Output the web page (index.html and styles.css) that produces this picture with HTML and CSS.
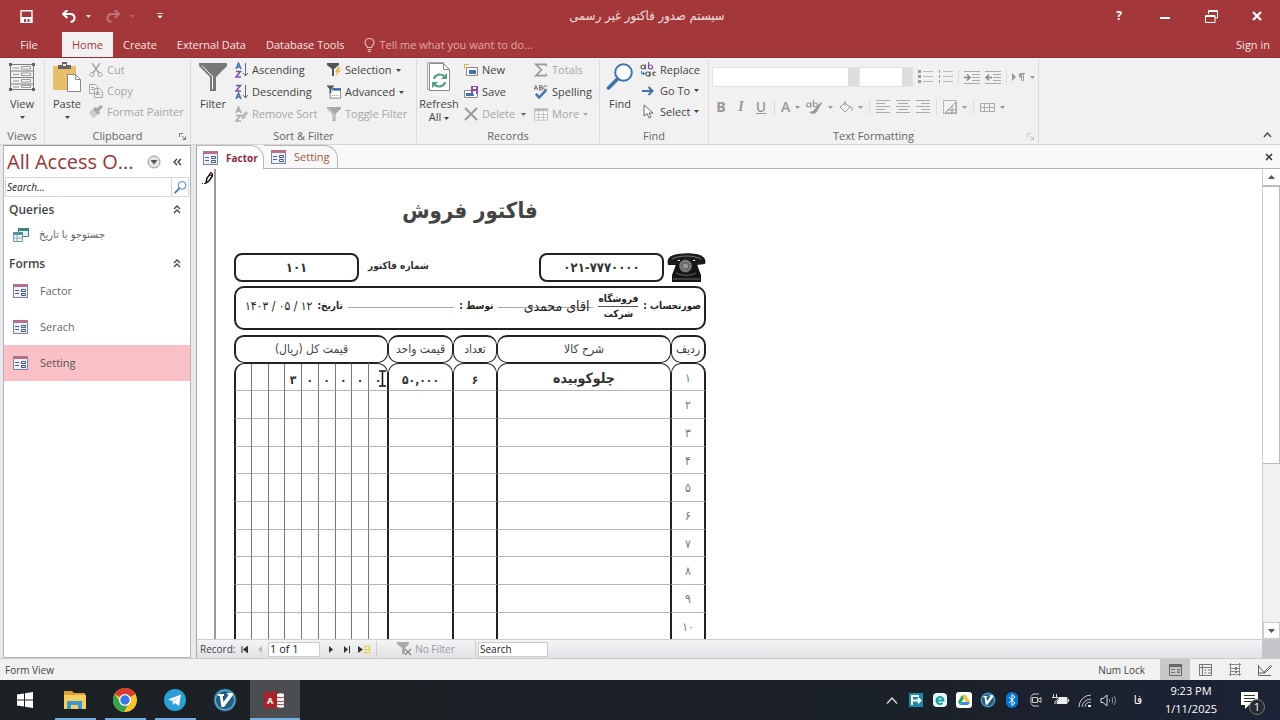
FILE: index.html
```html
<!DOCTYPE html>
<html lang="en">
<head>
<meta charset="utf-8">
<title>سیستم صدور فاکتور غیر رسمی</title>
<link rel="stylesheet" href="styles.css">
</head>
<body>
<svg class="defs" aria-hidden="true">
  <symbol id="form" viewBox="0 0 15 14"><rect x=".5" y=".5" width="14" height="13" fill="#eef1f8" stroke="#7c83a8"/><path d="M0 0h15v3H0z" fill="#b6708c"/><path d="M2 6.500h4M2 9.500h4" stroke="#4a5f9c"/><path d="M8.500 5.500h4v2h-4zM8.500 9.500h4v2h-4z" fill="#fff" stroke="#3f5697"/></symbol>
  <symbol id="dd" viewBox="0 0 5 3"><path d="M0 0h5L2.500 3z" fill="currentColor"/></symbol>
  <symbol id="launch" viewBox="0 0 7 7"><path d="M.5 4V.5H4M3 3l3 3M6.500 3.500v3h-3" fill="none" stroke="currentColor"/></symbol>
  <symbol id="up2" viewBox="0 0 8 9"><path d="M1 4l3-3 3 3M1 8l3-3 3 3" fill="none" stroke="#444" stroke-width="1.300"/></symbol>
  <symbol id="lens" viewBox="0 0 28 28"><circle cx="17.500" cy="9.500" r="8.300" fill="#fafcff" stroke="#3f72af" stroke-width="2"/><path d="M11.500 16L2.500 25" stroke="#3f72af" stroke-width="3.600" stroke-linecap="round"/></symbol>
  <symbol id="funnel" viewBox="0 0 28 28"><path d="M0 0h28v3L17 14v14h-6V14L0 3z" fill="currentColor"/><path d="M3 2.500l10.500 11V26" fill="none" stroke="#fff" stroke-width="1"/></symbol>
  <symbol id="vim" viewBox="0 0 24 24"><circle cx="12" cy="12" r="11.500" fill="#215f85"/><circle cx="12" cy="12" r="9.800" fill="none" stroke="#65a7cb" stroke-width="1.500"/><path d="M5 6h6v2H9.500l1 6L16 6.500h-2V5h6v2L11 19H8.500L6.800 8H5z" fill="#fff"/></symbol>
</svg>

<header class="top">
  <div class="titlebar">
    <div class="quick">
      <button class="ic" aria-label="Save"><svg width="13" height="13" viewBox="0 0 13 13"><path d="M1 .7h11v11.600H1z" fill="none" stroke="#fff" stroke-width="1.400"/><path d="M1 7h11v5.300H1z" fill="#fff"/><path d="M4 9h2v3H4zM7.500 9h2v3h-2z" fill="#a4373a"/></svg></button>
      <button class="ic undo" aria-label="Undo"><svg width="14" height="13" viewBox="0 0 14 13"><path d="M5.500 0L1 4l4.500 4M1.500 4H9c5 1 4.500 7.500-.5 7.800" fill="none" stroke="#fff" stroke-width="2"/></svg></button>
      <svg class="w" width="5" height="3"><use href="#dd"/></svg>
      <button class="ic dim" aria-label="Redo"><svg width="14" height="13" viewBox="0 0 14 13"><path d="M8.500 0L13 4 8.500 8M12.500 4H5c-5 1-4.500 7.500.5 7.800" fill="none" stroke="#fff" stroke-width="2"/></svg></button>
      <svg class="w dim" width="5" height="3"><use href="#dd"/></svg>
      <button class="ic more" aria-label="Customize"><svg width="6" height="6" viewBox="0 0 6 6"><path d="M0 .5h6M1 3h4L3 5z" fill="#fff" stroke="#fff" stroke-width=".8"/></svg></button>
    </div>
    <h1 class="apptitle fa" dir="rtl">سیستم صدور فاکتور غیر رسمی</h1>
    <div class="wincontrols">
      <button class="help" aria-label="Help">?</button>
      <button aria-label="Minimize"><svg width="10" height="10"><path d="M0 7h10" stroke="#fff" stroke-width="2"/></svg></button>
      <button aria-label="Restore"><svg width="13" height="13" viewBox="0 0 13 13"><path d="M3.500 4V.5h9V8H10M3 1.500h10M.5 5.500H10v7H.5zM0 6.500h10" fill="none" stroke="#fff"/></svg></button>
      <button aria-label="Close"><svg width="10" height="10"><path d="M1 1l8 8M9 1L1 9" stroke="#fff" stroke-width="2.200"/></svg></button>
    </div>
  </div>
  <nav class="tabs">
    <button class="file">File</button><button class="on">Home</button><button>Create</button><button>External Data</button><button>Database Tools</button>
    <button class="tell"><svg width="11" height="14" viewBox="0 0 11 14"><path d="M3.500 9.500C3.500 8 1 7 1 4.800a4.500 4.300 0 0 1 9 0C10 7 7.500 8 7.500 9.500zM3.500 11.500h4M4 13.300h3" fill="none" stroke="#eab4b6" stroke-width="1.200"/></svg>Tell me what you want to do...</button>
    <button class="sign">Sign in</button>
  </nav>
</header>

<section class="ribbon">
  <div class="group g-views">
    <div class="tools"><button class="big"><svg width="26" height="28" viewBox="0 0 26 28"><path d="M1.500 1v26M24.500 1v26M1 1.500h24M1 8h24M1 14.500h24M1 21h24M1 26.500h24" stroke="#7d7d7d" fill="none"/><path d="M12.500 3.500h9v2.500h-9zM12.500 10h9v2.500h-9zM12.500 16.500h9V19h-9zM12.500 22.500h9v2h-9z" fill="#fff" stroke="#999"/><path d="M4 5h6M4 11.500h6M4 18h6M4 24h6" stroke="#999"/><path d="M0 0h3v3H0zM23 0h3v3h-3zM0 25h3v3H0zM23 25h3v3h-3z" fill="#666"/></svg>View<svg width="5" height="3"><use href="#dd"/></svg></button></div>
    <p>Views</p>
  </div>
  <div class="group g-clip">
    <div class="tools">
      <button class="big"><svg width="28" height="30" viewBox="0 0 28 30"><path d="M0 4h23v24H0z" fill="#e9be6a"/><path d="M5 7V3h4V0h5v3h4v4z" fill="#666"/><path d="M10 2h3v2h-3z" fill="#eee"/><path d="M14.500 12.500h8l5 5v12h-13z" fill="#fff" stroke="#888"/><path d="M22.500 12.500v5h5" fill="none" stroke="#888"/></svg>Paste<svg width="5" height="3"><use href="#dd"/></svg></button>
      <div class="stack off tight">
        <button><svg width="14" height="14" viewBox="0 0 14 14"><path d="M3 0l7 10M11 0L4 10" stroke="currentColor" stroke-width="1.600"/><circle cx="3" cy="11.500" r="2" fill="none" stroke="currentColor"/><circle cx="11" cy="11.500" r="2" fill="none" stroke="currentColor"/></svg>Cut</button>
        <button><svg width="14" height="14" viewBox="0 0 14 14"><path d="M.5.5h6l2 2v7h-8zM5.500 4.500h5l3 3v6h-8z" fill="#f1f1f1" stroke="currentColor"/><path d="M2 3.500h3M2 5.500h3M7 8.500h4M7 10.500h4" stroke="currentColor"/></svg>Copy</button>
        <button><svg width="14" height="14" viewBox="0 0 14 14"><path d="M0 7l4-3 5 5-4 4c-1-1-3-1-5-6z" fill="#ccc"/><path d="M4 4l2-2 2 1 4-3 2 2-4 4 1 2-2 2z" fill="currentColor"/></svg>Format Painter</button>
      </div>
    </div>
    <p>Clipboard</p><button class="launch" aria-label="Clipboard options"><svg width="7" height="7"><use href="#launch"/></svg></button>
  </div>
  <div class="group g-sort">
    <div class="tools">
      <button class="big"><svg class="gray" width="28" height="28"><use href="#funnel"/></svg>Filter</button>
      <div class="stack s1">
        <button><svg width="13" height="16" viewBox="0 0 13 16"><path d="M1 7L3.500 1 6 7M2 5h3" class="gl b"/><path d="M1 9.500h4.500L1 15h5" class="gl p"/><path d="M10.500 1v13M8 11l2.500 3 2.500-3" fill="none" stroke="#666"/></svg>Ascending</button>
        <button><svg width="13" height="16" viewBox="0 0 13 16"><path d="M1 1.500h4.500L1 7h5" class="gl p"/><path d="M1 15l2.500-6L6 15M2 13h3" class="gl b"/><path d="M10.500 1v13M8 11l2.500 3 2.500-3" fill="none" stroke="#666"/></svg>Descending</button>
        <button class="off"><svg width="13" height="16" viewBox="0 0 13 16"><path d="M1 7L3.500 1 6 7M2 5h3M1 9.500h4.500L1 15h5" class="gl o"/><path d="M6 10l5-5 2 2-4 6H7z" fill="#bbb"/></svg>Remove Sort</button>
      </div>
      <div class="stack s2">
        <button><svg width="14" height="14" viewBox="0 0 14 14"><path d="M0 0h12v2L7 6v7H5V6L0 2z" fill="#555"/><path d="M11 4l-3 5h2l-2 5 6-7h-2l1-3z" fill="#e8b959"/></svg>Selection<svg width="5" height="3"><use href="#dd"/></svg></button>
        <button><svg width="14" height="14" viewBox="0 0 16 15"><path d="M3.500 3.500h12v11h-12z" fill="#fff" stroke="#777"/><path d="M6 3h10v3H6z" fill="#3f72af"/><path d="M0 0h8v1L5 4v5H3V4L0 1z" fill="#555"/><path d="M6 11.500h7" stroke="#777" stroke-dasharray="1 1"/></svg>Advanced<svg width="5" height="3"><use href="#dd"/></svg></button>
        <button class="off"><svg width="14" height="14"><use href="#funnel"/></svg>Toggle Filter</button>
      </div>
    </div>
    <p>Sort &amp; Filter</p>
  </div>
  <div class="group g-rec">
    <div class="tools">
      <button class="big"><svg width="24" height="30" viewBox="0 0 24 30"><path d="M.5.500h16v27H.5z" fill="#f7f7f7" stroke="#aaa"/><path d="M2.500 1.500h14l6 6v21h-20z" fill="#fff" stroke="#888"/><path d="M16.500 1.500v6h6" fill="none" stroke="#888"/><path d="M7 17c1-5 8-6 11-2M18 20c-1 5-8 6-11 2" fill="none" stroke="#57a07f" stroke-width="2.200"/><path d="M20 11v6h-6zM5 26v-6h6z" fill="#57a07f"/></svg>Refresh<span>All <svg width="5" height="3"><use href="#dd"/></svg></span></button>
      <div class="stack s3">
        <button><svg width="14" height="12" viewBox="0 0 14 12"><path d="M2.500 3.500h11v8h-11z" fill="#fff" stroke="#888"/><path d="M5 6h7v4H5z" fill="#3f72af"/><path d="M0 0h5v1H1v4H0z" fill="#e3ae5b"/></svg>New</button>
        <button><svg width="14" height="12" viewBox="0 0 14 12"><path d="M.5 4.500h13v7H.5z" fill="#fff" stroke="#888"/><path d="M2 7h8v3H2z" fill="#3f72af"/><path d="M7 0h7v8H7z" fill="#8a4bab"/><path d="M9 1h3v2H9zM9 5h3v3H9z" fill="#fff"/></svg>Save</button>
        <button class="off"><svg width="14" height="14"><path d="M1 1l12 12M13 1L1 13" stroke="#999" stroke-width="2"/></svg>Delete<svg class="dark" width="5" height="3"><use href="#dd"/></svg></button>
      </div>
      <div class="stack">
        <button class="off"><svg width="14" height="14" viewBox="0 0 15 14"><path d="M13 3V1H2l6 6-6 6h11v-2" fill="none" stroke="#999" stroke-width="1.700"/></svg>Totals</button>
        <button><svg width="14" height="16" viewBox="0 0 15 16"><path d="M0 6l2-5 2 5M1 4h2M6 1v5h2c2 0 2-2.500 0-2.500H6h1.500c2 0 2-2.500 0-2.500zM14 2c-3-2-4 1-3.500 2 .5 2 2 2 3.500 1" fill="none" stroke="#666"/><path d="M2 10l3.500 4L13 6" fill="none" stroke="#3f72af" stroke-width="2.500"/></svg>Spelling</button>
        <button class="off"><svg width="14" height="13" viewBox="0 0 15 13"><path d="M.5.500h14v12H.5zM.5 6.500h14M.5 9.500h14M5 3v9M10 3v9" fill="#fff" stroke="#c3bcc1"/><path d="M0 0h15v3H0z" fill="#bbb"/></svg>More<svg width="5" height="3"><use href="#dd"/></svg></button>
      </div>
    </div>
    <p>Records</p>
  </div>
  <div class="group g-find">
    <div class="tools">
      <button class="big"><svg width="28" height="28"><use href="#lens"/></svg>Find</button>
      <div class="stack tight">
        <button><svg width="16" height="16" viewBox="0 0 16 16"><g fill="none" stroke="#555" stroke-width="1.200"><circle cx="3" cy="5" r="2"/><path d="M5.300 2.500v5"/><circle cx="7.800" cy="12" r="2"/><path d="M10 9.500v5M15.500 10.500c-3-1.500-4 3-.3 3"/></g><path d="M8.500 0v7M8.500 5a2 2 0 1 0 4 0 2 2 0 1 0-4 0" fill="none" stroke="#7d4fa3" stroke-width="1.200"/><path d="M1.500 9v2.500h3M3 10l1.500 1.500L3 13" stroke="#3f72af" fill="none"/></svg>Replace</button>
        <button><svg width="16" height="10" viewBox="0 0 16 10"><path d="M2 5h10M8.500 1l4 4-4 4" fill="none" stroke="#3f72af" stroke-width="2"/></svg>Go To<svg width="5" height="3"><use href="#dd"/></svg></button>
        <button><svg width="16" height="15" viewBox="0 0 16 15"><path d="M4 1v11l3-2.500L9 14l2-1-2-4h4z" fill="#fff" stroke="#666"/></svg>Select<svg width="5" height="3"><use href="#dd"/></svg></button>
      </div>
    </div>
    <p>Find</p>
  </div>
  <div class="group g-text">
    <div class="fmt">
      <div class="fline">
        <select class="fontname" aria-label="Font"><option></option></select><select class="fontsize" aria-label="Font size"><option></option></select>
        <button aria-label="Bullets"><svg width="15" height="14" viewBox="0 0 15 14"><path d="M5 1.500h10M5 6.500h10M5 11.500h10" stroke="#bbb"/><path d="M0 0h3v3H0zM0 5h3v3H0zM0 10h3v3H0z" fill="#999"/></svg></button>
        <button aria-label="Numbering"><svg width="15" height="14" viewBox="0 0 15 14"><path d="M5 1.500h10M5 6.500h10M5 11.500h10" stroke="#bbb"/><path d="M1.500 0v14" stroke="#999" stroke-dasharray="3 2"/></svg></button>
        <i></i>
        <button aria-label="Indent"><svg width="16" height="15" viewBox="0 0 16 15"><path d="M0 1.500h16M8 4.500h8M8 7.500h8M8 10.500h8M0 13.500h16" stroke="#aaa"/><path d="M0 7.500h6M3 4.500l3 3-3 3" fill="none" stroke="#888" stroke-width="1.500"/></svg></button>
        <button aria-label="Outdent"><svg width="16" height="15" viewBox="0 0 16 15"><path d="M0 1.500h16M8 4.500h8M8 7.500h8M8 10.500h8M0 13.500h16" stroke="#aaa"/><path d="M1 7.500h6M4 4.500l-3 3 3 3" fill="none" stroke="#888" stroke-width="1.500"/></svg></button>
        <i></i>
        <button class="para" aria-label="Text direction"><svg width="13" height="9" viewBox="0 0 13 9"><path d="M0 0l4 4-4 4zM9 0h4v1h-1v7h-1V1h-1v7H9V4.500a2 2 0 0 1 0-4.500z" fill="#999"/></svg><svg width="5" height="3"><use href="#dd"/></svg></button>
      </div>
      <div class="fline two">
        <button class="bold">B</button><button class="ital">I</button><button class="und">U</button><i></i>
        <button class="car" aria-label="Font color"><b>A</b><svg width="5" height="3"><use href="#dd"/></svg></button>
        <button class="car" aria-label="Highlight"><svg width="17" height="15" viewBox="0 0 17 15"><g fill="none" stroke="#999" stroke-width="1.200"><circle cx="2.800" cy="5" r="2"/><path d="M5 2.500v5M7.500 0v7M7.500 5a2 2 0 1 0 4 0 2 2 0 1 0-4 0"/></g><path d="M15 2L7 11l-4 1 3 2 4-1 6-10z" fill="#999"/></svg><svg width="5" height="3"><use href="#dd"/></svg></button>
        <button class="car" aria-label="Fill"><svg width="14" height="14" viewBox="0 0 14 14"><path d="M6 1v5M1 7l5-4 5 4-5 5zM11 6c2 1 2 3 2 5" fill="none" stroke="#999"/></svg><svg width="5" height="3"><use href="#dd"/></svg></button><i></i>
        <button aria-label="Left"><svg width="14" height="14"><path d="M0 .5h14M0 3.500h9M0 6.500h14M0 9.500h9M0 12.500h14" stroke="#aaa"/></svg></button>
        <button aria-label="Center"><svg width="14" height="14"><path d="M0 .5h14M2 3.500h10M0 6.500h14M2 9.500h10M0 12.500h14" stroke="#aaa"/></svg></button>
        <button aria-label="Right"><svg width="14" height="14"><path d="M0 .5h14M5 3.500h9M0 6.500h14M5 9.500h9M0 12.500h14" stroke="#aaa"/></svg></button><i></i>
        <button class="car" aria-label="Gridlines"><svg width="14" height="14" viewBox="0 0 14 14"><path d="M.5.500h13v13H.5z" fill="none" stroke="#999" stroke-dasharray="2 1"/><path d="M13 2L2 13h11zM9 6v7M5 10h8" fill="none" stroke="#999"/></svg><svg width="5" height="3"><use href="#dd"/></svg></button><i></i>
        <button class="car" aria-label="Row color"><svg width="15" height="9" viewBox="0 0 15 9"><path d="M.5.500h14v8H.5zM0 4.500h15M4.500 0v9M9.500 0v9" fill="none" stroke="#aaa"/></svg><svg width="5" height="3"><use href="#dd"/></svg></button>
      </div>
    </div>
    <p>Text Formatting</p><button class="launch pale" aria-label="Formatting options"><svg width="7" height="7"><use href="#launch"/></svg></button>
  </div>
  <button class="collapse" aria-label="Collapse ribbon"><svg width="9" height="6"><path d="M1 5l3.500-4L8 5" fill="none" stroke="#555" stroke-width="1.600"/></svg></button>
</section>

<main>
  <aside>
    <div class="paneh"><h2>All Access O...</h2><button aria-label="Menu"><svg width="14" height="14"><circle cx="7" cy="7" r="6" fill="#e6e6ea" stroke="#999"/><path d="M3.500 5h7L7 9.500z" fill="#555"/></svg></button><button aria-label="Collapse"><svg width="9" height="8"><path d="M4 1L1 4l3 3M8 1L5 4l3 3" fill="none" stroke="#333" stroke-width="1.300"/></svg></button></div>
    <div class="search"><input type="text" aria-label="Search" placeholder="Search..."><button aria-label="Go"><svg width="13" height="13"><use href="#lens"/></svg></button></div>
    <h3>Queries<svg width="8" height="9"><use href="#up2"/></svg></h3>
    <a href="#" class="fa q"><svg width="16" height="14" viewBox="0 0 16 14"><path d="M5.500.500h10v8h-10z" fill="#e4f0f0" stroke="#438187"/><path d="M5 0h11v3H5z" fill="#438187"/><path d="M.5 5.500h9v8h-9z" fill="#edf4f5" stroke="#7198b0"/><path d="M0 4h10v3H0z" fill="#5193a0"/><path d="M0 10h9M4 7v6" stroke="#91aebd"/></svg><span dir="rtl">جستوجو با تاریخ</span></a>
    <h3>Forms<svg width="8" height="9"><use href="#up2"/></svg></h3>
    <a href="#"><svg width="15" height="14"><use href="#form"/></svg>Factor</a>
    <a href="#"><svg width="15" height="14"><use href="#form"/></svg>Serach</a>
    <a href="#" class="sel"><svg width="15" height="14"><use href="#form"/></svg>Setting</a>
  </aside>
  <div class="doc">
    <div class="doctabs">
      <button class="cur"><svg width="15" height="14"><use href="#form"/></svg>Factor</button>
      <button><svg width="15" height="14"><use href="#form"/></svg>Setting</button>
      <button class="closedoc" aria-label="Close"><svg width="8" height="8"><path d="M1 1l6 6M7 1L1 7" stroke="#333" stroke-width="1.500"/></svg></button>
    </div>
    <div class="view">
      <div class="selector"><svg width="11" height="12" viewBox="0 0 11 12"><path d="M0 11.500h3" stroke="#222" stroke-dasharray="1 1"/><path d="M4 11l1-5 4-5 2 2-4 6z" fill="#fff" stroke="#111" stroke-width="1.500"/><path d="M7 2l2-2 2 2-1 3z" fill="#111"/><path d="M8 1h2v2H8z" fill="#b44"/></svg></div>
      <form class="invoice fa" dir="rtl">
        <h2>فاکتور فروش</h2>
        <div class="ids">
          <svg width="39" height="30" viewBox="0 0 39 30"><path d="M1 12C-1 4 5 2 11 1c6-1 13-1 18 0 6 1 11 4 9 10l-8 1-2-5H11l-2 5z" fill="#1c1c1c"/><path d="M10 8h3V5h2v2h9V5h2v3h3l3 9 2 5v7H5v-7l2-5z" fill="#151515"/><path d="M5 6c7-4 22-4 29 0" fill="none" stroke="#777"/><circle cx="18.500" cy="13" r="6.500" fill="#666"/><circle cx="18.500" cy="13" r="5" fill="none" stroke="#aaa" stroke-dasharray="1.500 1.500"/><circle cx="18.500" cy="13" r="2.500" fill="#999"/><path d="M9 20c6 3 14 3 20 0M6 26h27" fill="none" stroke="#666"/></svg>
          <input type="text" dir="ltr" aria-label="تلفن" value="۰۲۱-۷۷۷۰۰۰۰">
          <label for="num">شماره فاکتور</label>
          <input type="text" id="num" class="num" dir="ltr" value="۱۰۱">
        </div>
        <div class="account">
          <label class="strong" for="cust">صورتحساب :</label>
          <span class="frac"><b>فروشگاه</b><b>شرکت</b></span>
          <input type="text" id="cust" value="اقای محمدی">
          <label for="by">توسط :</label><input type="text" id="by" class="by">
          <b>تاریخ:</b><span class="date" dir="ltr">۱۴۰۳ / ۰۵ / ۱۲</span>
        </div>
        <table>
          <colgroup><col class="c1"><col class="c2"><col class="c3"><col class="c4"><col class="units"><col span="8"></colgroup>
          <thead><tr><th>ردیف</th><th>شرح کالا</th><th>تعداد</th><th>قیمت واحد</th><th colspan="9">قیمت کل (ریال)</th></tr></thead>
          <tbody>
            <tr><td>۱</td><td class="item">چلوکوبیده</td><td class="v">۶</td><td class="v">۵۰,۰۰۰</td><td class="v">۰<svg class="beam" width="9" height="17"><path d="M1 1h3l.5.500L5 1h3M4.500 1v15M1 16h7" fill="none" stroke="#111" stroke-width="1.500"/></svg></td><td class="v">۰</td><td class="v">۰</td><td class="v">۰</td><td class="v">۰</td><td class="v">۳</td><td></td><td></td><td></td></tr>
            <tr><td>۲</td><td></td><td></td><td></td><td></td><td></td><td></td><td></td><td></td><td></td><td></td><td></td><td></td></tr>
            <tr><td>۳</td><td></td><td></td><td></td><td></td><td></td><td></td><td></td><td></td><td></td><td></td><td></td><td></td></tr>
            <tr><td>۴</td><td></td><td></td><td></td><td></td><td></td><td></td><td></td><td></td><td></td><td></td><td></td><td></td></tr>
            <tr><td>۵</td><td></td><td></td><td></td><td></td><td></td><td></td><td></td><td></td><td></td><td></td><td></td><td></td></tr>
            <tr><td>۶</td><td></td><td></td><td></td><td></td><td></td><td></td><td></td><td></td><td></td><td></td><td></td><td></td></tr>
            <tr><td>۷</td><td></td><td></td><td></td><td></td><td></td><td></td><td></td><td></td><td></td><td></td><td></td><td></td></tr>
            <tr><td>۸</td><td></td><td></td><td></td><td></td><td></td><td></td><td></td><td></td><td></td><td></td><td></td><td></td></tr>
            <tr><td>۹</td><td></td><td></td><td></td><td></td><td></td><td></td><td></td><td></td><td></td><td></td><td></td><td></td></tr>
            <tr><td>۱۰</td><td></td><td></td><td></td><td></td><td></td><td></td><td></td><td></td><td></td><td></td><td></td><td></td></tr>
          </tbody>
        </table>
      </form>
      <div class="scroll"><button aria-label="Scroll up"><svg width="7" height="4"><path d="M0 4h7L3.500 0z" fill="#555"/></svg></button><div class="thumb"></div><button class="down" aria-label="Scroll down"><svg width="7" height="4"><path d="M0 0h7L3.500 4z" fill="#555"/></svg></button></div>
    </div>
    <div class="recnav">
      <label for="rec">Record:</label>
      <button aria-label="First"><svg width="7" height="7"><path d="M1 0v7M7 0v7L2.500 3.500z" fill="#333" stroke="#333"/></svg></button>
      <button aria-label="Previous"><svg width="7" height="7"><path d="M5 0v7L1 3.500z" fill="#bbb"/></svg></button>
      <input type="text" id="rec" value="1 of 1">
      <button class="next" aria-label="Next"><svg width="7" height="7"><path d="M1 0v7l4-3.500z" fill="#333"/></svg></button>
      <button aria-label="Last"><svg width="7" height="7"><path d="M0 0v7l4-3.500z" fill="#333"/><path d="M5.500 0v7" stroke="#333"/></svg></button>
      <button class="newrec" aria-label="New record"><svg width="13" height="9"><path d="M0 1v7l5-3.500z" fill="#333"/><path d="M6 1.500h6M6 4.500h7M6 7.500h6M7.500 0v9M11.500 0v9" stroke="#e8cf55"/></svg></button>
      <button class="nofilter"><svg width="15" height="14" viewBox="0 0 15 14"><path d="M0 0h12v2L8 6v6H5V6L0 2z" fill="#aaa"/><path d="M8 7l6 6M14 7l-6 6" stroke="#888" stroke-width="1.300"/></svg>No Filter</button>
      <input type="text" class="find" aria-label="Search records" value="Search">
      <span class="corner"></span>
    </div>
  </div>
</main>

<footer class="status"><span>Form View</span><span class="lock">Num Lock</span>
  <button class="on" aria-label="Form view"><svg width="13" height="12"><path d="M.5.500h12v11H.5z" fill="none" stroke="#666"/><path d="M0 0h13v3H0z" fill="#666"/><path d="M2 5.500h4M2 8.500h4M8 5.500h3M8 8.500h3M8 7h3" stroke="#777"/></svg></button>
  <button aria-label="Layout view"><svg width="13" height="12"><path d="M.5.500h12v11H.5zM0 3.500h13M3.500 0v12M5.500 6h2M9 6h3M5.500 9h2M9 9h3" fill="none" stroke="#777"/></svg></button>
  <button aria-label="Design layout"><svg width="12" height="13"><path d="M1.500 0v13M10.500 0v13M0 1.500h12M2 5.500h8M2 8.500h8M0 11.500h12" fill="none" stroke="#888"/><path d="M6 4h2v3H6zM6 8h2v2H6z" fill="#777"/></svg></button>
  <button aria-label="Design view"><svg width="14" height="12"><path d="M.5 1v10.500H13M.5 2l6 7H0M13 1L7 7 6 9l2-1 6-6" fill="none" stroke="#666"/></svg></button>
</footer>

<div class="taskbar">
  <button aria-label="Start"><svg width="16" height="16" viewBox="0 0 16 16"><path d="M0 2.500l7-1v6H0zM8 1.300L16 0v7.500H8zM0 8.500h7v6l-7-1zM8 8.500h8V16l-8-1.300z" fill="#fff"/></svg></button>
  <button class="run" aria-label="Explorer"><svg width="22" height="18" viewBox="0 0 22 18"><path d="M0 0h8l2 2h11v16H0z" fill="#dba23a"/><path d="M0 4h22v14H0z" fill="#f6cf63"/><path d="M3 10h15v8h-4v-4H7v4H3z" fill="#3f97c9"/></svg></button>
  <button class="run" aria-label="Chrome"><svg width="24" height="24" viewBox="0 0 24 24"><circle cx="12" cy="12" r="12" fill="#f8c52c"/><path d="M12 12L1.600 6A12 12 0 0 1 22.400 6z" fill="#d93d31"/><path d="M12 0a12 12 0 0 1 10.400 6H12z" fill="#d93d31"/><path d="M1.600 6A12 12 0 0 0 11 24l5.500-10H7z" fill="#35a153"/><circle cx="12" cy="12" r="6" fill="#fff"/><circle cx="12" cy="12" r="4.700" fill="#3b78e7"/></svg></button>
  <button class="run" aria-label="Telegram"><svg width="22" height="22" viewBox="0 0 22 22"><circle cx="11" cy="11" r="11" fill="#2ba0d8"/><path d="M4 10.500L17 5.500 15 17l-4-3-2 2-.5-4z" fill="#fff"/><path d="M8.500 12l6-4.500L10 13z" fill="#aad7ed"/></svg></button>
  <button aria-label="Vim"><svg width="24" height="24"><use href="#vim"/></svg></button>
  <button class="run act" aria-label="Access"><svg width="22" height="18" viewBox="0 0 22 18"><path d="M0 1l13-1v18L0 17z" fill="#a4262c"/><text x="3" y="13" class="acc">A</text><path d="M13 3c3-1 5-1 7 0v13c-2 1-4 1-7 0z" fill="#fff"/><path d="M13 6c3 1 5 1 7 0M13 10c3 1 5 1 7 0M13 13c3 1 5 1 7 0" fill="none" stroke="#a4262c"/></svg></button>
  <div class="tray">
    <button aria-label="Hidden icons"><svg width="12" height="7"><path d="M1 6.500L6 1l5 5.500" fill="none" stroke="#ddd" stroke-width="1.300"/></svg></button>
    <button aria-label="Transfer"><svg width="14" height="14"><path d="M0 0h14v14H0z" fill="#188ca9"/><path d="M3 12V3h7M4 7.500h7M9 5l2.500 2.500L9 10" fill="none" stroke="#fff" stroke-width="2"/></svg></button>
    <button aria-label="Antivirus"><svg width="14" height="14"><rect width="14" height="14" rx="4" fill="#e7f7f6"/><path d="M3.500 7.500h7a3.500 3.500 0 1 0-1 2.500" fill="none" stroke="#139d9d" stroke-width="2"/></svg></button>
    <button aria-label="Drive"><svg width="16" height="16" viewBox="0 0 16 16"><rect width="16" height="16" rx="3" fill="#fff"/><path d="M6 3L2 10l2 3 4-7z" fill="#23a566"/><path d="M6 3h4l4 7h-4z" fill="#fbc02d"/><path d="M4 13l2-3h8l-2 3z" fill="#4285f4"/></svg></button>
    <button aria-label="Vim"><svg width="16" height="16"><use href="#vim"/></svg></button>
    <button aria-label="Bluetooth"><svg width="12" height="16"><rect width="12" height="16" rx="6" fill="#0878d6"/><path d="M3 5l6 6-3 2.500v-11L9 5l-6 6" fill="none" stroke="#fff"/></svg></button>
    <button aria-label="Camera"><svg width="13" height="14"><path d="M3 1h6M3 13h6M2.500 4.500h5v5h-5zM8 6.500l3-2v5l-3-2M1 3.500L3 1M1 10.500L3 13M1 4v6" fill="none" stroke="#ccc"/></svg></button>
    <button aria-label="Battery"><svg width="17" height="12"><path d="M1.500 0v3M4.500 0v3M0 3.500h6v2l-3 2V10" fill="none" stroke="#ddd"/><path d="M7 3.500h8v6H5V8l2-2z" fill="#eee" stroke="#eee"/><path d="M16.500 5v3" stroke="#eee"/></svg></button>
    <button aria-label="Wifi"><svg width="13" height="13"><path d="M1 13A12 12 0 0 1 13 1M4 13a9 9 0 0 1 9-8M7 13a6 6 0 0 1 6-5" fill="none" stroke="#ccc"/><path d="M10 11h3v2h-3z" fill="#eee"/></svg></button>
    <button aria-label="Volume"><svg width="16" height="13"><path d="M1 4.500h2L7 1v11L3 8.500H1z" fill="none" stroke="#ddd"/><path d="M9.500 5v3M12 3.500c1 2 1 4 0 6M14 2c2 3 2 6 0 9" fill="none" stroke="#999"/></svg></button>
    <button class="fa lang">فا</button>
    <div class="clock"><span>9:23 PM</span><span>1/11/2025</span></div>
    <button class="notes" aria-label="Notifications"><svg width="17" height="17" viewBox="0 0 17 17"><path d="M0 0h17v13H8l-4 4v-4H0z" fill="#fff"/><path d="M3 3.500h11M3 6.500h11M3 9.500h8" stroke="#333"/></svg><span>1</span></button>
  </div>
</div>
</body>
</html>
```
FILE: styles.css
```css
* { box-sizing: border-box; }
body { margin: 0; height: 100vh; display: flex; flex-direction: column; overflow: hidden; background: #fff; color: #444; font: 11px/16px "Open Sans", "Noto Sans", sans-serif; }
button { border: 0; padding: 0; margin: 0; background: none; color: inherit; font: inherit; white-space: nowrap; display: flex; align-items: center; justify-content: center; flex: none; }
input, select { font: inherit; color: inherit; border: 0; padding: 0; margin: 0; min-width: 0; border-radius: 0; }
h1, h2, h3, p { margin: 0; font-weight: 400; }
a { color: inherit; text-decoration: none; }
svg { flex: none; }
.fa { font-family: "DejaVu Sans Condensed", "DejaVu Sans", sans-serif; }
.defs { position: absolute; width: 0; height: 0; }

/* Title bar and ribbon tabs */
.top { background: #a4373a; color: #fff; height: 58px; flex: none; border-bottom: 1px solid #8c3236; }
.titlebar { display: grid; grid-template-columns: 1fr auto 1fr; align-items: center; height: 32px; }
.quick { display: flex; align-items: center; padding-left: 20px; }
.undo { margin: 0 10px 0 29px; }
.w { margin-right: 15px; color: #f3d9da; }
.quick .dim { opacity: .3; }
.quick .ic.dim { margin-right: 10px; }
.quick .w.dim { margin-right: 22px; }
.apptitle { font-size: 13px; line-height: 16px; color: #f3dcdc; padding-left: 14px; }
.wincontrols { display: flex; justify-content: flex-end; }
.wincontrols button { width: 46px; height: 30px; }
.help { font-weight: 700; }
.wincontrols .help { font-size: 12px; }
.tabs { display: flex; height: 25px; align-items: stretch; color: #f7e4e4; }
.tabs button { padding: 0 10px; }
.tabs .file { width: 62px; padding: 0 4px 0 0; }
.tabs .on { width: 51px; background: #f1f1f1; color: #a4373a; padding: 0; }
.tabs .tell { color: #e3a9ab; gap: 4px; }
.tabs .sign { margin-left: auto; }

/* Ribbon */
.ribbon { display: flex; flex: none; height: 87px; background: #f1f1f1; border-bottom: 1px solid #d5d5d5; }
.group { display: flex; flex-direction: column; border-right: 1px solid #dcdcdc; margin: 1px 0; position: relative; }
.group p { text-align: center; font-size: 11px; line-height: 14px; color: #666; }
.g-views { width: 45px; }
.g-clip { width: 146px; }
.g-sort { width: 226px; }
.g-rec { width: 183px; }
.g-find { width: 109px; }
.g-text { width: 330px; }
.tools { display: flex; flex: 1; align-items: flex-start; }
.big { flex-direction: column; width: 44px; padding-top: 3px; gap: 4px; }
.big > svg:first-child { height: 30px; }
.big span { margin-top: -7px; }
.big span svg { vertical-align: middle; }
.gray { color: #777; }
.stack { display: flex; flex-direction: column; align-items: flex-start; }
.stack button { height: 22px; gap: 4px; }
.stack.tight button { height: 21px; }
.off { color: #a6a6a6; }
.dark { color: #666; margin-left: 2px; }
.g-find .big { width: 40px; }
.s1 { width: 92px; }
.s3 { width: 73px; padding-left: 3px; }
.gl { fill: none; stroke-width: 1.5; }
.b { stroke: #3f72af; }
.p { stroke: #7d4fa3; }
.o { stroke: #aaa; }
.launch { position: absolute; right: 4px; bottom: 3px; color: #777; }
.pale { color: #c4c4c4; }
.fmt { flex: 1; padding: 8px 0 0 3px; color: #999; }
.fline { display: flex; align-items: center; gap: 5px; height: 20px; }
.fline i { border-left: 1px solid #ddd; height: 15px; }
.fontname { width: 147px; }
.fontsize { width: 54px; margin-left: -5px; }
.fmt select { appearance: none; height: 20px; border: 1px solid #e2e2e2; background: linear-gradient(#ddd, #ddd) right / 10px 100% no-repeat #fff; }
.para { gap: 5px; }
.two { gap: 6px; margin-top: 10px; padding-left: 2px; }
.two button { min-width: 14px; }
.two button b { font-size: 14px; font-weight: 600; }
.two .car { gap: 5px; }
.two .bold { font-weight: 700; font-size: 14px; }
.two .ital { font: italic 700 14px "Liberation Serif", serif; }
.two .und { text-decoration: underline; font-weight: 600; font-size: 14px; }
.collapse { margin: auto 8px 6px auto; }

/* Navigation pane */
main { display: flex; flex: 1; min-height: 0; background: #e9e9eb; }
aside { width: 188px; flex: none; margin-left: 3px; background: #fff; border: 1px solid #b5b5b8; border-top-color: #999; display: flex; flex-direction: column; }
.paneh { display: flex; align-items: center; height: 31px; padding: 0 8px 0 3px; }
.paneh h2 { flex: 1; font-size: 20px; line-height: 30px; color: #953639; white-space: nowrap; }
.paneh button + button { margin-left: 12px; }
.search { display: flex; height: 20px; border: 1px solid #d5d9df; margin: 0 1px; }
.search input { flex: 1; font-size: 10px; font-style: italic; padding-left: 1px; }
.search input::placeholder { color: #222; opacity: 1; }
.search button { width: 17px; border-left: 1px solid #d5d9df; }
aside h3 { display: flex; align-items: center; justify-content: space-between; font-size: 12px; line-height: 18px; padding: 4px 9px 0 5px; font-weight: 600; }
aside h3 svg { margin-bottom: 2px; }
aside a { display: flex; align-items: center; gap: 12px; height: 36px; padding-left: 9px; color: #666; }
aside a.q { height: 32px; gap: 10px; font-size: 11px; }
aside .sel { background: #f9c1c5; color: #555; }

/* Document */
.doc { flex: 1; min-width: 0; margin-left: 5px; display: flex; flex-direction: column; border-left: 1px solid #aaa; }
.doctabs { display: flex; height: 24px; flex: none; background: #f8f8f8; border-bottom: 1px solid #b3b3b3; align-items: stretch; padding-right: 7px; }
.doctabs button { gap: 8px; justify-content: flex-start; padding-left: 7px; border: 1px solid #b8b8b8; border-width: 1px 1px 0 0; border-radius: 0 14px 0 0; width: 74px; color: #9c5b3f; }
.doctabs .cur { background: #fff; color: #8b2c40; font-weight: 700; font-size: 10px; width: 67px; margin-bottom: -1px; padding-left: 6px; }
.doctabs .closedoc { margin-left: auto; border: 0; width: 8px; padding: 0; }
.view { display: flex; flex: 1; min-height: 0; background: #fff; overflow: hidden; }
.selector { width: 19px; border-right: 2px solid #999; padding: 3px 0 0 5px; flex: none; }
.invoice { width: 472px; margin-left: 18px; flex: none; color: #333; }
.invoice h2 { text-align: center; font-size: 22px; line-height: 36px; font-weight: 700; color: #444; padding: 24px 0; }
.ids { display: flex; align-items: flex-start; height: 30px; }
.ids input { width: 125px; height: 29px; border: 2px solid #222; border-radius: 8px; text-align: center; font-size: 13px; font-weight: 700; background: #fff; }
.ids label { margin: 5px auto 0 9px; font-size: 10px; font-weight: 700; }
.ids > svg { margin-left: 3px; }
.account { display: flex; align-items: center; gap: 5px; height: 44px; margin: 3px 0 5px; border: 2px solid #222; border-radius: 10px; padding: 0 3px 4px 9px; font-size: 10px; font-weight: 700; color: #222; white-space: nowrap; }
.frac { display: flex; flex-direction: column; text-align: center; line-height: 14px; }
.frac b:first-child { border-bottom: 1px solid #555; }
.account input { flex: 8; width: 0; height: 20px; font-size: 14px; font-weight: 400; background: linear-gradient(#aaa, #aaa) 0 11px / 100% 1px no-repeat; padding-right: 4px; }
.account .by { flex: 9; }
.date { font-weight: 400; font-size: 12px; }
table { width: 100%; table-layout: fixed; border-collapse: separate; border-spacing: 0; }
.c1 { width: 35px; }
.c2 { width: 174px; }
.c3 { width: 44px; }
.c4 { width: 65px; }
.units { width: 20px; }
th { height: 28px; padding: 0 0 2px; border: 2px solid #222; border-width: 2px 1px 1px; border-radius: 10px; font-size: 12px; font-weight: 400; white-space: nowrap; color: #444; }
th:first-child { border-right-width: 2px; }
th:last-child { border-left-width: 2px; }
td { height: 28px; padding: 1px 0 0; text-align: center; border: 0 solid #222; border-left: 1px solid #777; border-bottom: 1px solid #b5b5b5; font-size: 12px; color: #777; position: relative; }
tr:nth-child(3n+1) td { height: 27px; }
tbody tr:first-child td { height: 28px; border-top: 1px solid #222; }
td:nth-child(-n+4) { border-left: 1px solid #222; border-right: 1px solid #222; }
td:first-child { border-right-width: 2px; }
td:nth-child(5) { border-right: 1px solid #222; }
td:last-child { border-left: 2px solid #222; }
tbody tr:first-child td:nth-child(-n+4) { border-radius: 10px 10px 0 0; }
tbody tr:first-child td:nth-child(5) { border-radius: 0 10px 0 0; }
tbody tr:first-child td:last-child { border-radius: 10px 0 0 0; }
td.v { color: #333; font-weight: 700; padding-top: 6px; }
td.item { color: #333; font-size: 14px; font-weight: 700; }
.beam { position: absolute; right: 0; top: 6px; }
.scroll { width: 18px; margin-left: auto; background: #f1f1f1; display: flex; flex-direction: column; border-left: 1px solid #ccc; }
.scroll button { height: 17px; background: #fff; border-bottom: 1px solid #bbb; }
.scroll .down { margin-top: auto; border: 1px solid #ccc; }
.thumb { height: 278px; background: #fff; border: 1px solid #bbb; border-left: 0; }
.recnav { display: flex; align-items: center; height: 19px; flex: none; background: linear-gradient(#f4f4f6, #e2e2e6); border-top: 1px solid #ccc; padding-left: 3px; }
.recnav button { width: 16px; height: 16px; }
.recnav label { font-size: 10px; width: 36px; }
.recnav input { width: 52px; height: 15px; background: #fff; border: 1px solid #ccc; padding-left: 1px; color: #222; }
.recnav .next { margin-left: 3px; }
.recnav .newrec { margin-right: 4px; margin-left: 1px; }
.recnav .nofilter { width: 100px; color: #999; gap: 3px; font-size: 10px; border: solid #ccc; border-width: 0 1px; }
.recnav .find { width: 70px; margin-left: 2px; font-size: 10px; }
.corner { margin-left: auto; width: 18px; height: 18px; background: #c5c5c9; }

/* Status bar */
.status { display: flex; align-items: center; height: 22px; flex: none; background: #f1f1f1; border-top: 1px solid #ccc; font-size: 10px; padding-left: 5px; }
.lock { margin: 0 15px 0 auto; }
.status button { width: 30px; height: 21px; }
.status .on { background: #c8c8c8; }

/* Taskbar */
.taskbar { display: flex; height: 40px; flex: none; background: linear-gradient(90deg, #1b2023, #1b2128 70%, #1b2336); color: #fff; }
.taskbar > button { width: 50px; }
.run { background: linear-gradient(#76b0e2, #76b0e2) bottom / 41px 2px no-repeat; }
.run.act { background: linear-gradient(#76b0e2, #76b0e2) bottom / 100% 2px no-repeat #4b4d50; }
.acc { font: 700 9px "Open Sans", sans-serif; fill: #fff; }
.tray { display: flex; margin-left: auto; align-items: center; }
.tray button { width: 24px; height: 40px; }
.tray .lang { width: 36px; font-size: 12px; }
.clock { width: 70px; display: flex; flex-direction: column; text-align: center; line-height: 18px; }
.tray .notes { position: relative; width: 54px; padding-right: 8px; }
.notes span { position: absolute; left: 23px; top: 19px; width: 16px; height: 16px; border: 1px solid #777; border-radius: 50%; background: #252b31; font-size: 11px; line-height: 14px; }
```
